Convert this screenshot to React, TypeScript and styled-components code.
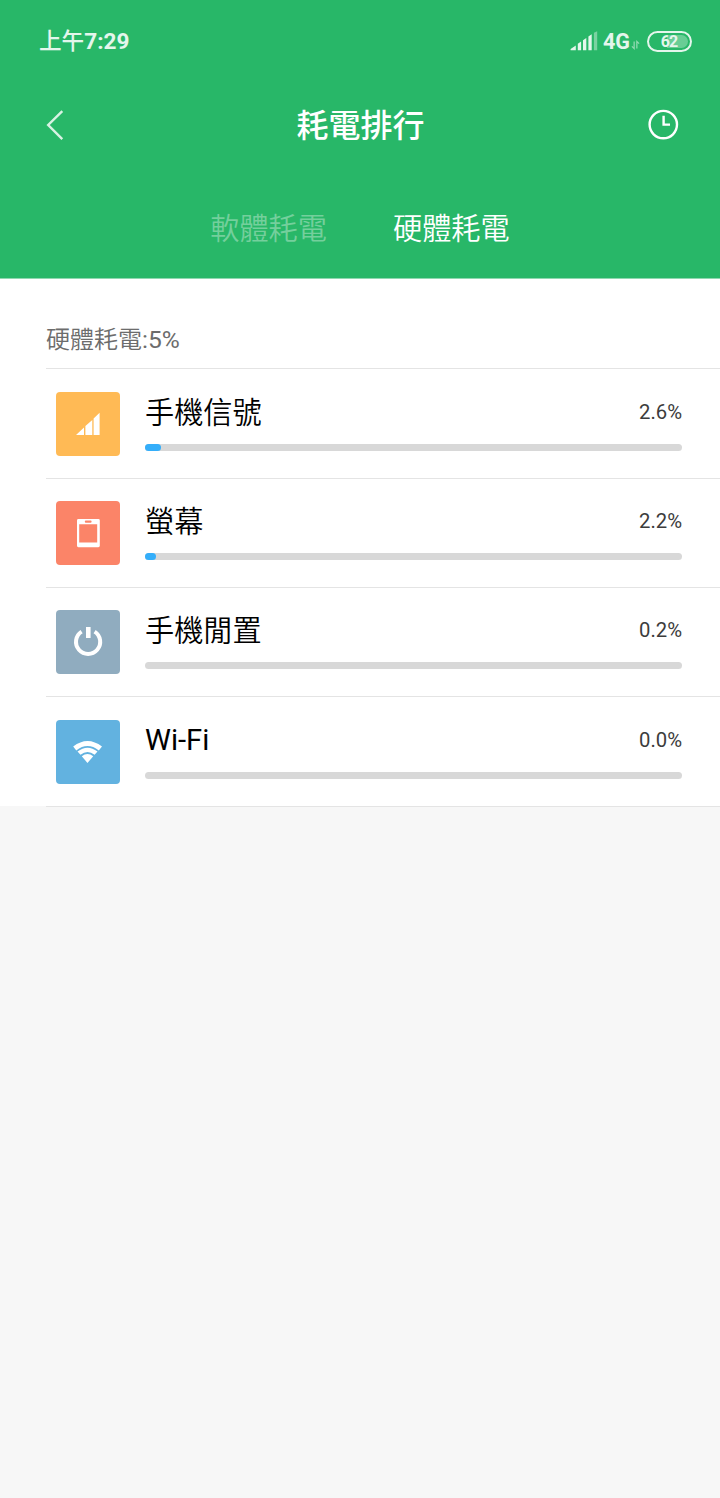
import React from "react";
import styled, { createGlobalStyle } from "styled-components";

const GlobalStyle = createGlobalStyle`
  *, *::before, *::after { box-sizing: border-box; }
  body {
    margin: 0;
    background: #f7f7f7;
    font-family: Roboto, "Noto Sans CJK TC", sans-serif;
  }
`;

const Screen = styled.main`
  min-height: 1498px;
  background: #f7f7f7;
`;

const Header = styled.header`
  height: 279px;
  border-bottom: 1px solid #8fd8b0;
  background: #28b768;
  color: #fff;
`;

const StatusBar = styled.div`
  display: flex;
  align-items: center;
  height: 82px;
  padding: 0 28px 0 39px;
  color: #e4f6ec;
`;

const Clock = styled.span`
  flex: 1;
  padding-top: 2px;
  font-size: 22.6px;
  line-height: 30px;
  font-weight: 500;
`;

const SignalIcon = styled.svg`
  width: 28px;
  height: 20px;
  margin-right: 5px;
`;

const Network = styled.span`
  font-size: 21.5px;
  line-height: 30px;
  padding-top: 1px;
  font-weight: 700;
`;

const DataIcon = styled.svg`
  width: 9px;
  height: 12px;
  margin: 8px 7px 0 1px;
`;

const Battery = styled.div`
  display: flex;
  align-items: center;
  justify-content: center;
  width: 45px;
  height: 21px;
  border: 2px solid #e4f6ec;
  border-radius: 11px;
  padding: 2px;
`;

const BatteryLevel = styled.div`
  flex: 1;
  height: 13px;
  padding-right: 1px;
  border-radius: 7px;
  background: linear-gradient(90deg, transparent 42%, #69cd95 42%);
  font-size: 16px;
  line-height: 14px;
  letter-spacing: -1px;
  font-weight: 700;
  text-align: center;
`;

const TitleBar = styled.div`
  display: grid;
  grid-template-columns: 48px 1fr 48px;
  align-items: center;
  height: 86px;
  padding: 0 33px;
`;

const IconButton = styled.button`
  display: flex;
  align-items: center;
  justify-content: center;
  width: 48px;
  height: 48px;
  padding: 0;
  border: 0;
  background: none;
  color: #fff;
`;

const Title = styled.h1`
  margin: 0;
  padding: 2px 0 0 1px;
  font-size: 32px;
  line-height: 44px;
  font-weight: 500;
  text-align: center;
`;

const Tabs = styled.nav`
  display: flex;
  justify-content: center;
  gap: 66px;
  padding-top: 41px;
`;

const Tab = styled.span<{ $active?: boolean }>`
  font-size: 29.2px;
  line-height: 40px;
  font-weight: 350;
  color: ${(p) => (p.$active ? "#fff" : "#74cf9c")};
`;

const Panel = styled.section`
  height: 527px;
  background: #fff;
`;

const Summary = styled.div`
  height: 89.3px;
  padding: 41px 0 0 46px;
  font-size: 24px;
  line-height: 40px;
  font-weight: 350;
  color: #6c6c6c;
`;

const Amount = styled.span`
  font-size: 24.6px;
  font-weight: 400;
`;

const List = styled.ul`
  margin: 0 0 0 46px;
  padding: 0;
  list-style: none;
  border-bottom: 1px solid #e4e4e4;
`;

const Row = styled.li`
  display: flex;
  height: 109.33px;
  padding: 22.3px 38px 0 10px;
  border-top: 1px solid #e4e4e4;
`;

const Tile = styled.div<{ $color: string }>`
  width: 64px;
  height: 64px;
  margin-right: 25px;
  border-radius: 4px;
  background: ${(p) => p.$color};
`;

const Details = styled.div`
  flex: 1;
`;

const Label = styled.div`
  display: flex;
  align-items: flex-start;
  justify-content: space-between;
  height: 40px;
`;

const Name = styled.span<{ $latin?: boolean }>`
  padding-top: ${(p) => (p.$latin ? 0 : 1)}px;
  font-size: 29.2px;
  line-height: 40px;
  font-weight: ${(p) => (p.$latin ? 400 : 350)};
  color: #000;
`;

const Percent = styled.span`
  font-size: 20.3px;
  line-height: 40px;
  color: #3c3c3c;
`;

const Track = styled.div`
  height: 7px;
  margin-top: 12px;
  border-radius: 4px;
  background: #d8d8d8;
`;

const Fill = styled.div`
  height: 7px;
  border-radius: 4px;
  background: #34aefa;
`;

const Glyph = ({ children }: { children: React.ReactNode }) => (
  <svg width="64" height="64" viewBox="0 0 64 64" fill="#fff">
    {children}
  </svg>
);

const items = [
  {
    name: "手機信號",
    percent: "2.6%",
    fill: 16.4,
    color: "#ffba55",
    glyph: <path d="M20 43 28 35.5V43ZM29.4 34 36.3 28V43H29.4ZM37.6 26.4 43.6 20.8V43H37.6Z" />,
  },
  {
    name: "螢幕",
    percent: "2.2%",
    fill: 11.4,
    color: "#fb8468",
    glyph: (
      <path
        fillRule="evenodd"
        d="M22 18H42.4Q43.8 18 43.8 19.4V44.8Q43.8 46.2 42.4 46.2H22.4Q21 46.2 21 44.8V19.4Q21 18 22.4 18ZM29.8 19.4Q28.8 19.4 28.8 20.6T29.8 21.8H34.6Q35.6 21.8 35.6 20.6T34.6 19.4ZM23.2 23.2V41.4H41.2V23.2Z"
      />
    ),
  },
  {
    name: "手機閒置",
    percent: "0.2%",
    fill: 0,
    color: "#90acbf",
    glyph: (
      <>
        <path d="M25.6 21.6A12.1 12.1 0 1 0 38.6 21.6" fill="none" stroke="#fff" strokeWidth="4" />
        <path d="M30 17h4.6v11H30z" />
      </>
    ),
  },
  {
    name: "Wi-Fi",
    percent: "0.0%",
    fill: 0,
    color: "#62b2e0",
    latin: true,
    glyph: (
      <>
        <path d="M17.2 26.5Q31.5 15.5 46 26.5L42.8 30.4Q31.5 21.8 20.3 30.4Z" />
        <path d="M21.5 31.5Q31.5 23.8 41.5 31.5L38.6 34.8Q31.5 29.4 24.5 34.8Z" />
        <path d="M25.8 36.2Q31.5 32 37.2 36.2L31.5 43Z" />
      </>
    ),
  },
];

export default function App() {
  return (
    <>
      <GlobalStyle />
      <Screen>
        <Header>
          <StatusBar>
            <Clock>上午<b>7:29</b></Clock>
            <SignalIcon viewBox="0 0 28 20" fill="#e4f6ec">
              <path d="M.6 19.2V18L5.8 14.6v4.6zM7.8 19.2v-6.4l3.3-2.2v8.6zM13 19.2V9.2l3.3-2.2v12.2zM18.4 19.2V5.4l3.3-2.2v16z" />
              <path d="M23.9 19.2V1.8L27.2.2v19z" fill="#7bd2a1" />
            </SignalIcon>
            <Network>4G</Network>
            <DataIcon viewBox="0 0 10 12" fill="none" stroke="#93dab2" strokeWidth="1.4">
              <path d="M3.5 2v8L1 7.5M6.5 10V2L9 4.5" />
            </DataIcon>
            <Battery>
              <BatteryLevel>62</BatteryLevel>
            </Battery>
          </StatusBar>
          <TitleBar>
            <IconButton aria-label="返回">
              <svg width="48" height="48" viewBox="0 0 48 48" fill="none" stroke="#d8f2e3" strokeWidth="2.4">
                <path d="M29.3 10.2 15.2 24 29.3 38.2" />
              </svg>
            </IconButton>
            <Title>耗電排行</Title>
            <IconButton aria-label="歷史">
              <svg width="48" height="48" viewBox="0 0 48 48" fill="none" stroke="#fff" strokeWidth="2.4">
                <circle cx="24.3" cy="23.6" r="13.7" />
                <path d="M24.6 14.8V23.6H31" />
              </svg>
            </IconButton>
          </TitleBar>
          <Tabs>
            <Tab>軟體耗電</Tab>
            <Tab $active>硬體耗電</Tab>
          </Tabs>
        </Header>
        <Panel>
          <Summary>
            硬體耗電<Amount>:5%</Amount>
          </Summary>
          <List>
            {items.map((item) => (
              <Row key={item.name}>
                <Tile $color={item.color}>
                  <Glyph>{item.glyph}</Glyph>
                </Tile>
                <Details>
                  <Label>
                    <Name $latin={item.latin}>{item.name}</Name>
                    <Percent>{item.percent}</Percent>
                  </Label>
                  <Track>
                    <Fill style={{ width: item.fill }} />
                  </Track>
                </Details>
              </Row>
            ))}
          </List>
        </Panel>
      </Screen>
    </>
  );
}
